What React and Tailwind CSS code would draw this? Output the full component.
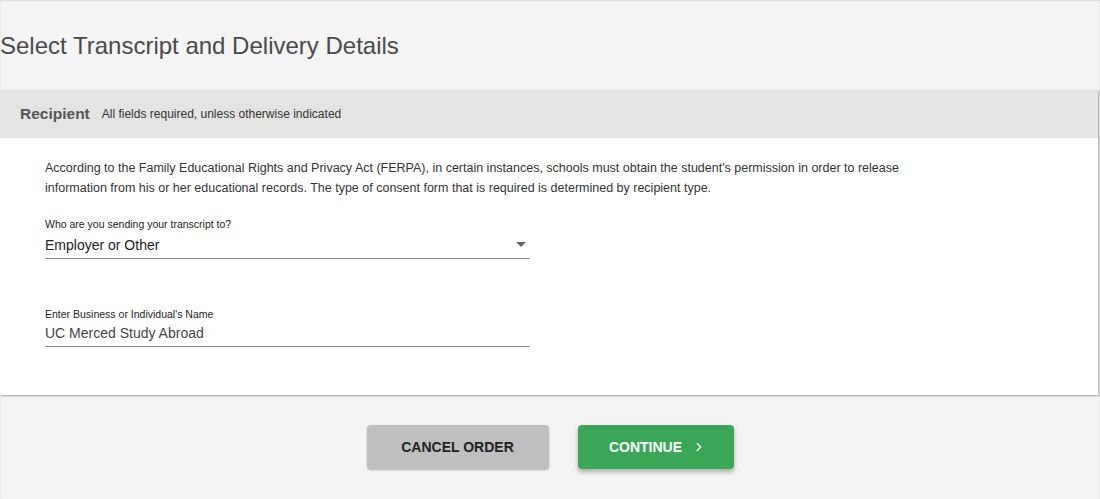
import { ChevronRight } from 'lucide-react'

function Field({ label, value, select }) {
  return (
    <div className="w-[485px]">
      <label className="block text-[10.5px] leading-[14px] text-[#222]">{label}</label>
      <div className={select ? 'flex items-center justify-between h-[28px] pt-[2px] border-b border-[#8a8a8a]' : 'flex items-center justify-between h-[26px] border-b border-[#8a8a8a]'}>
        <span className={select ? 'text-[14px] text-[#222]' : 'text-[14px] text-[#444]'}>{value}</span>
        {select && (
          <svg width="10" height="5" viewBox="0 0 10 5" className="mr-[4px] mb-[2px]">
            <path d="M0 0h10L5 5z" fill="#666" />
          </svg>
        )}
      </div>
    </div>
  )
}

export default function App() {
  return (
    <div className="min-h-[499px] bg-[#f4f4f4] font-[family-name:Liberation_Sans,Arial,sans-serif] shadow-[inset_0_1px_2px_rgba(0,0,0,0.12)]">
      {/* Title */}
      <div className="h-[90px] flex items-center">
        <h1 className="text-[24px] text-[#4a4a4a] pt-[1px]">Select Transcript and Delivery Details</h1>
      </div>

      {/* Card */}
      <div className="mr-[2px] bg-white shadow-[1px_1px_2px_rgba(0,0,0,0.35)]">
        <div className="h-[48px] bg-[#e4e4e2] flex items-center px-[20px] gap-[12px]">
          <span className="text-[15.5px] font-bold text-[#555]">Recipient</span>
          <span className="text-[12px] text-[#333]">All fields required, unless otherwise indicated</span>
        </div>

        <div className="px-[45px] pt-[20px] pb-[48px]">
          <p className="max-w-[885px] text-[12.5px] leading-[20px] text-[#333]">
            According to the Family Educational Rights and Privacy Act (FERPA), in certain instances, schools must obtain the student's permission in order to release information from his or her educational records. The type of consent form that is required is determined by recipient type.
          </p>

          <div className="mt-[19px]">
            <Field label="Who are you sending your transcript to?" value="Employer or Other" select />
          </div>
          <div className="mt-[48px]">
            <Field label="Enter Business or Individual's Name" value="UC Merced Study Abroad" />
          </div>
        </div>
      </div>

      {/* Actions */}
      <div className="flex justify-center gap-[29px] pt-[30px]">
        <button className="w-[182px] h-[44px] rounded-[4px] bg-[#bfbfbf] text-[14px] font-bold text-[#222] shadow-[0_1px_2px_rgba(0,0,0,0.3)]">
          CANCEL ORDER
        </button>
        <button className="w-[156px] h-[44px] rounded-[4px] bg-[#3aa757] text-[14px] font-bold text-white flex items-center justify-center gap-[10px] pl-[4px] shadow-[0_3px_5px_rgba(0,0,0,0.3)]">
          CONTINUE
          <ChevronRight className="w-[14px] h-[14px]" strokeWidth={2.5} />
        </button>
      </div>
    </div>
  )
}
